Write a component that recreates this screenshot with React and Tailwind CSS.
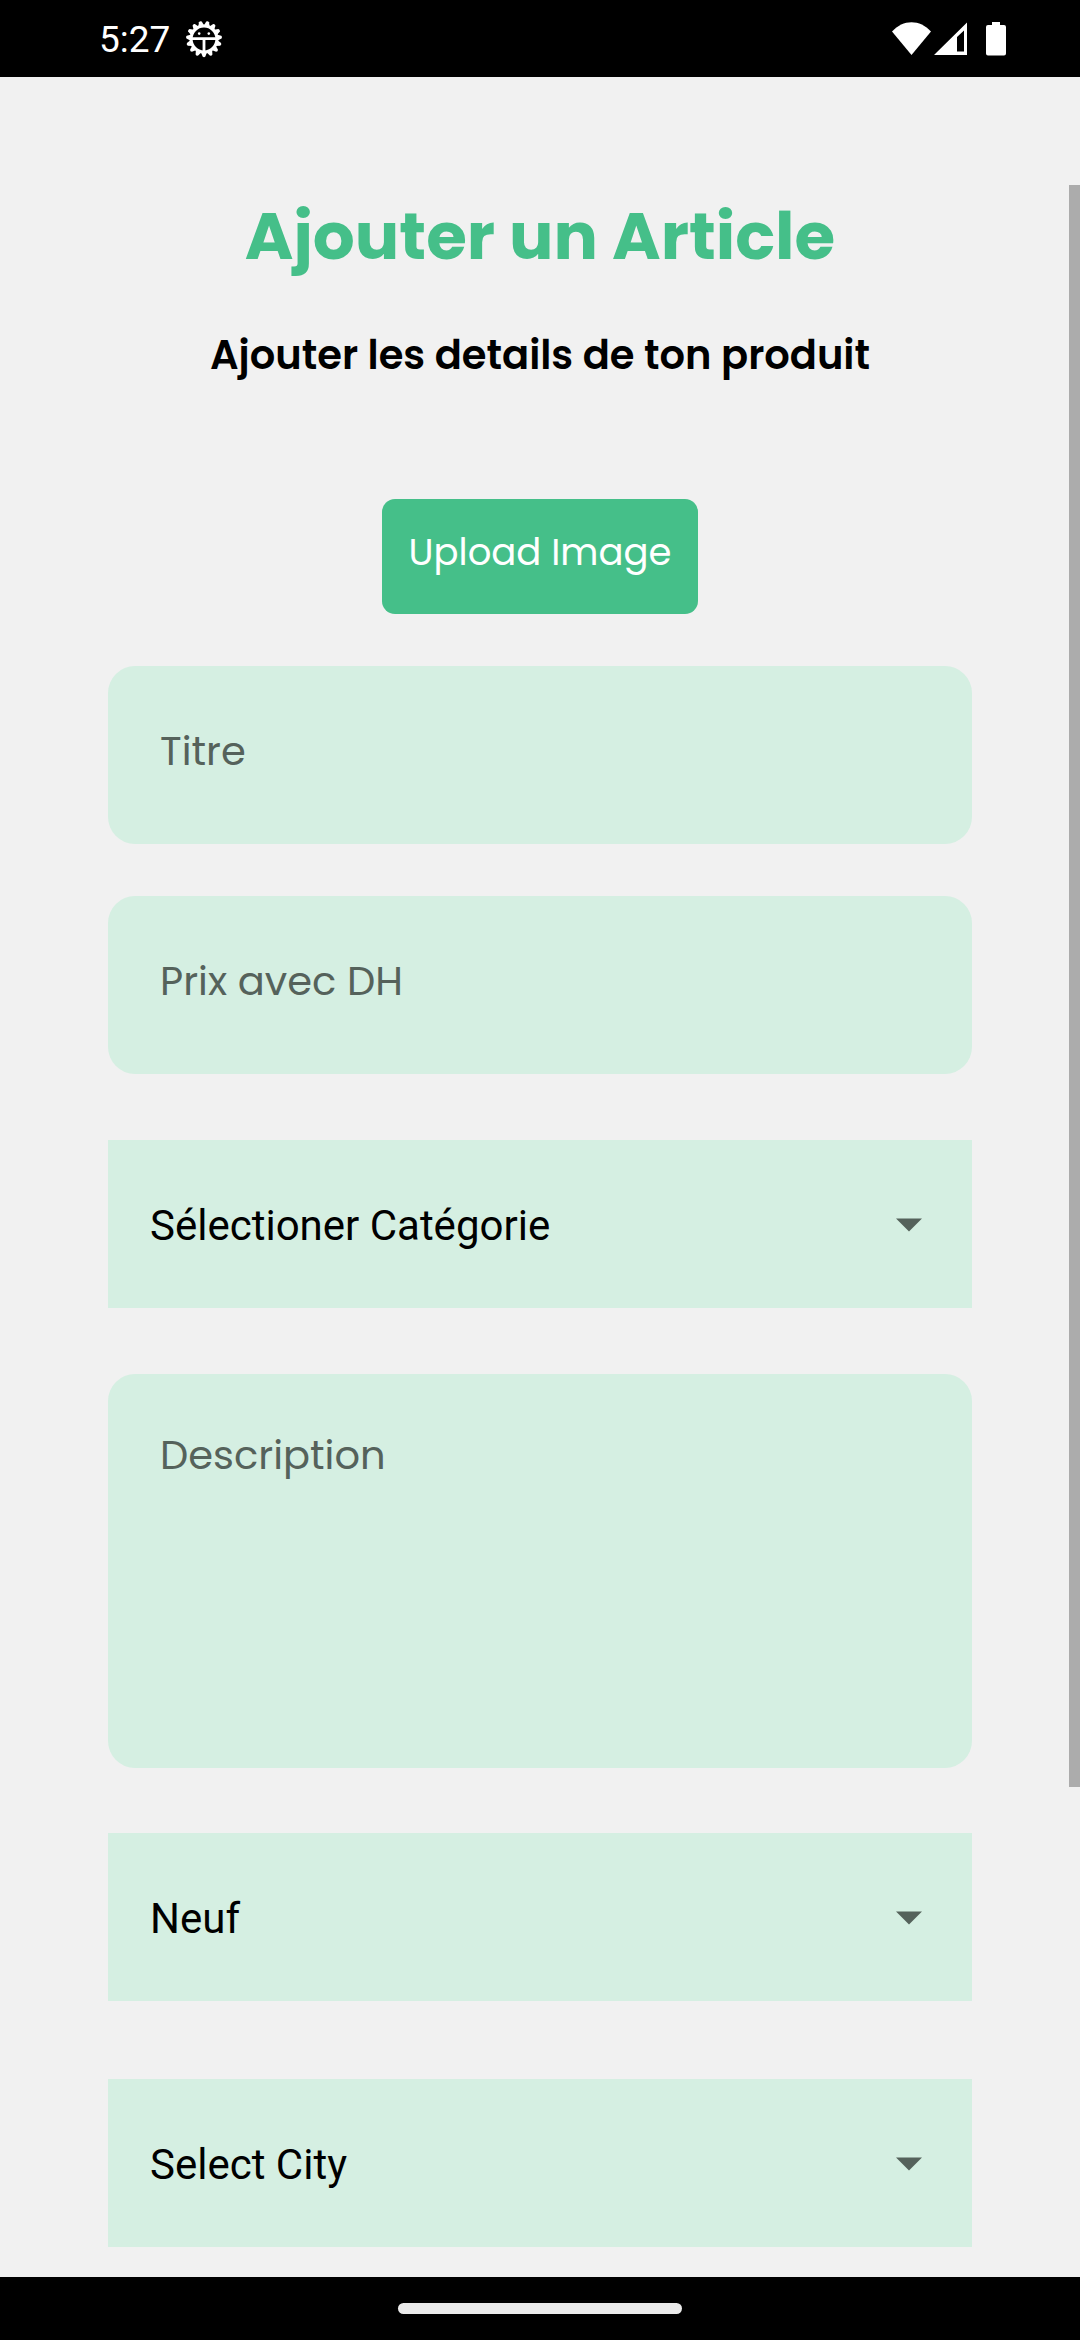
import React from "react";

const fieldClass =
  "block w-full rounded-[27px] bg-[#d5efe2] px-[52px] text-[40px] leading-[60px] text-black placeholder:text-[#55625b] placeholder:opacity-100 outline-none";

function Dropdown({ label, name, options }) {
  return (
    <div className="relative">
      <select
        name={name}
        aria-label={label}
        className="block h-[168px] w-full appearance-none bg-[#d5efe2] pl-[42px] pr-24 pt-[2px] font-['Roboto',sans-serif] text-[42px] text-black outline-none"
      >
        {options.map((option) => (
          <option key={option}>{option}</option>
        ))}
      </select>
      <svg
        viewBox="0 0 26 14"
        className="pointer-events-none absolute right-[50px] top-[78px] h-[14px] w-[26px]"
        aria-hidden="true"
      >
        <path d="M0 .6h26L13 13.6z" fill="#55625b" />
      </svg>
    </div>
  );
}

const teeth = Array.from({ length: 15 }, (_, i) => (i * 360) / 15 + 12);

function DebugIcon() {
  return (
    <svg viewBox="0 0 38 38" className="h-[38px] w-[38px]" aria-hidden="true">
      {teeth.map((angle) => (
        <path
          key={angle}
          d="M15.9 6 17.6 1.5Q19 .2 20.4 1.5L22.1 6z"
          fill="#fff"
          transform={`rotate(${angle} 19 19)`}
        />
      ))}
      <circle cx="19" cy="19" r="12.9" fill="none" stroke="#fff" strokeWidth="3" />
      <path d="M6 18.6h26M19 19v12" stroke="#fff" strokeWidth="2.8" />
      <circle cx="14.2" cy="13.6" r="1.3" fill="#fff" />
      <circle cx="23.8" cy="13.6" r="1.3" fill="#fff" />
    </svg>
  );
}

function StatusBar() {
  return (
    <header className="flex h-[77px] items-center justify-between bg-black pl-[99px] pr-[74px] text-white">
      <div className="flex items-center gap-[15px]">
        <span className="pt-[2px] font-['Roboto',sans-serif] text-[37px] leading-[44px]">5:27</span>
        <DebugIcon />
      </div>
      <div className="flex items-center">
        <svg viewBox="0 0 39 34" className="h-[34px] w-[39px]" aria-hidden="true">
          <path d="M0 9.5C11-3 28-3 39 9.5L19.5 33z" fill="#fff" />
        </svg>
        <svg viewBox="0 0 33 34" className="ml-[3px] h-[34px] w-[33px]" aria-hidden="true">
          <path fillRule="evenodd" d="M33 .5V33H0zM30 8.5 23 15v14.5h7z" fill="#fff" />
        </svg>
        <svg viewBox="0 0 20 34" className="ml-[19px] h-[34px] w-[20px]" aria-hidden="true">
          <path d="M6 0h8v3h4a2 2 0 0 1 2 2v26.5a2 2 0 0 1-2 2H2a2 2 0 0 1-2-2V5a2 2 0 0 1 2-2h4z" fill="#fff" />
        </svg>
      </div>
    </header>
  );
}

export default function App() {
  return (
    <div className="flex min-h-screen flex-col bg-[#f1f1f1] font-['Poppins','Inter',sans-serif]">
      <StatusBar />
      <main className="relative flex-1 px-[10%] pb-[30px] pt-[111px]">
        <h1 className="text-center text-[66px] font-bold leading-[96px] text-[#45bf89]">
          Ajouter un Article
        </h1>
        <h2 className="mt-[41px] text-center text-[40px] font-semibold leading-[60px] text-black">
          Ajouter les details de ton produit
        </h2>
        <form className="mt-[114px]" onSubmit={(e) => e.preventDefault()}>
          <button
            type="button"
            className="mx-auto block h-[115px] rounded-[13px] bg-[#45bf89] px-[27px] pb-[10px] text-[37px] leading-[56px] text-white"
          >
            Upload Image
          </button>
          <input
            type="text"
            name="titre"
            aria-label="Titre"
            placeholder="Titre"
            className={`${fieldClass} mt-[52px] h-[178px] pb-[9px]`}
          />
          <input
            type="text"
            name="prix"
            aria-label="Prix avec DH"
            placeholder="Prix avec DH"
            className={`${fieldClass} mt-[52px] h-[178px] pb-[9px]`}
          />
          <div className="mt-[66px]">
            <Dropdown label="Catégorie" name="categorie" options={["Sélectioner Catégorie"]} />
          </div>
          <textarea
            name="description"
            aria-label="Description"
            placeholder="Description"
            className={`${fieldClass} mt-[66px] h-[394px] resize-none pt-[51px]`}
          />
          <div className="mt-[65px] flex flex-col gap-[78px]">
            <Dropdown label="État" name="etat" options={["Neuf"]} />
            <Dropdown label="Ville" name="ville" options={["Select City"]} />
          </div>
        </form>
        <div className="absolute bottom-[490px] right-0 top-[108px] w-[11px] bg-[#acacac]" />
      </main>
      <footer className="flex h-[63px] items-center justify-center bg-black">
        <div className="h-[11px] w-[284px] rounded-full bg-[#ebebeb]" />
      </footer>
    </div>
  );
}
